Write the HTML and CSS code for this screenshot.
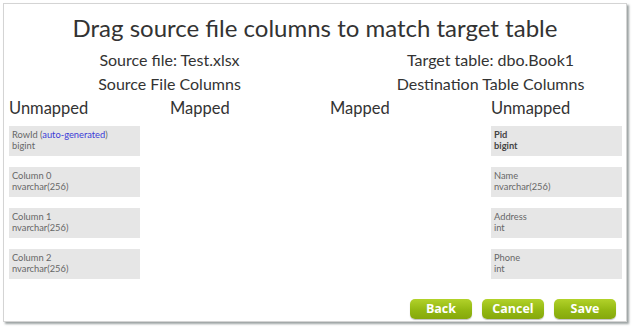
FILE: index.html
```html
<!DOCTYPE html>
<html>
<head>
<meta charset="utf-8">
<link rel="stylesheet" href="styles.css">
</head>
<body>
<div class="frame">
  <h1 class="title">Drag source file columns to match target table</h1>
  <div class="halves">
    <div class="half">
      <div class="sub">Source file: Test.xlsx</div>
      <div class="sub">Source File Columns</div>
    </div>
    <div class="half">
      <div class="sub">Target table: dbo.Book1</div>
      <div class="sub">Destination Table Columns</div>
    </div>
  </div>
  <div class="cols">
    <div class="col">
      <div class="head">Unmapped</div>
      <div class="card"><div>RowId (<span class="auto">auto-generated</span>)</div><div>bigint</div></div>
      <div class="card"><div>Column 0</div><div>nvarchar(256)</div></div>
      <div class="card"><div>Column 1</div><div>nvarchar(256)</div></div>
      <div class="card"><div>Column 2</div><div>nvarchar(256)</div></div>
    </div>
    <div class="col"><div class="head">Mapped</div></div>
    <div class="col"><div class="head">Mapped</div></div>
    <div class="col">
      <div class="head">Unmapped</div>
      <div class="card bold"><div>Pid</div><div>bigint</div></div>
      <div class="card"><div>Name</div><div>nvarchar(256)</div></div>
      <div class="card"><div>Address</div><div>int</div></div>
      <div class="card"><div>Phone</div><div>int</div></div>
    </div>
  </div>
  <div class="buttons">
    <button class="btn">Back</button>
    <button class="btn">Cancel</button>
    <button class="btn">Save</button>
  </div>
</div>
</body>
</html>
```
FILE: styles.css
```css
html, body {
  margin: 0;
  padding: 0;
  background: #ffffff;
}
body {
  width: 638px;
  height: 333px;
  overflow: hidden;
  font-family: Lato, "Open Sans", sans-serif;
}
.frame {
  margin: 3px 0 0 3px;
  width: 624px;
  height: 319px;
  box-sizing: border-box;
  border: 1px solid #d4d4d4;
  box-shadow: 2px 2px 2px rgba(90, 100, 100, 0.6);
  background: #fff;
  overflow: hidden;
  position: relative;
}
.title {
  margin: 0;
  padding-top: 6px;
  text-align: center;
  font-weight: normal;
  font-size: 24px;
  line-height: 35px;
  color: #333;
}
.halves {
  display: grid;
  grid-template-columns: 321px 321px;
  margin-left: 5px;
  margin-top: 3px;
}
.sub {
  text-align: center;
  font-size: 16px;
  line-height: 24px;
  color: #333;
}
.cols {
  display: grid;
  grid-template-columns: 161px 160px 161px 160px;
  margin-left: 5px;
  margin-top: 0;
}
.head {
  font-size: 16.5px;
  line-height: 25px;
  color: #333;
  margin-bottom: 5px;
}
.card {
  width: 131px;
  height: 30px;
  box-sizing: border-box;
  background: #e6e6e6;
  padding: 3px 3px 0 3px;
  font-size: 9.3px;
  line-height: 11px;
  color: #666;
  margin-bottom: 11px;
}
.card.bold {
  font-weight: bold;
  color: #444;
}
.auto {
  color: #3b3bd6;
}
.buttons {
  position: absolute;
  right: 10px;
  bottom: 2px;
  display: flex;
  gap: 10px;
}
.btn {
  width: 62px;
  height: 20px;
  border: 0;
  border-radius: 5px;
  background: linear-gradient(#b2d22a, #93b812 55%, #86a80c);
  box-shadow: 0 1px 1px rgba(0,0,0,0.25);
  color: #fff;
  font-family: "Open Sans", sans-serif;
  font-weight: bold;
  font-size: 12.5px;
  line-height: 20px;
  padding: 0;
}
```
